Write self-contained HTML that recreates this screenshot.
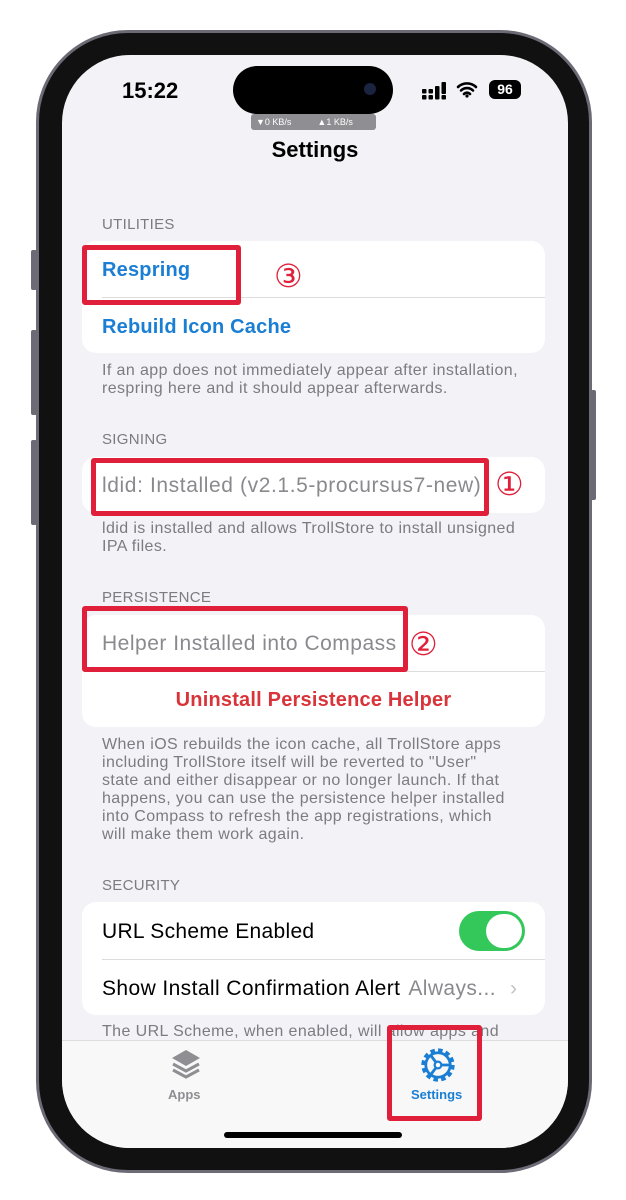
<!DOCTYPE html>
<html><head><meta charset="utf-8"><style>
*{margin:0;padding:0;box-sizing:border-box}
body{width:626px;height:1200px;background:#fff;position:relative;overflow:hidden;font-family:"Liberation Sans","Noto Sans CJK JP",sans-serif}
.a{position:absolute;white-space:nowrap}
.frame{left:36px;top:30px;width:556px;height:1143px;border-radius:92px;background:#111;border:3px solid #6c6a75}
.screen{left:62px;top:55px;width:506px;height:1093px;border-radius:68px;background:#f2f2f7;overflow:hidden}
.card{position:absolute;left:20px;width:463px;background:#fff;border-radius:14px}
.hd{color:#7b7b80;font-size:15px;letter-spacing:0.3px}
.ft{color:#7b7b80;font-size:16px;line-height:18px;letter-spacing:0.4px}
.row{font-size:20px;letter-spacing:0.5px}
.div{position:absolute;left:20px;right:0;height:1px;background:#ddd}
.red{position:absolute;border:5px solid #e0203a;border-radius:3px}
.num{position:absolute;color:#e0203a;font-size:32px;font-family:"DejaVu Sans",sans-serif}
</style></head><body>
<div class="a" style="left:31px;top:250px;width:6px;height:40px;background:#6c6a75;border-radius:2px"></div>
<div class="a" style="left:31px;top:330px;width:6px;height:85px;background:#6c6a75;border-radius:2px"></div>
<div class="a" style="left:31px;top:440px;width:6px;height:85px;background:#6c6a75;border-radius:2px"></div>
<div class="a" style="left:590px;top:390px;width:6px;height:110px;background:#6c6a75;border-radius:2px"></div>
<div class="a frame"></div>
<div class="a screen">
 <div class="a" style="left:60px;top:23px;font-size:22px;font-weight:bold">15:22</div>
 <div class="a" style="left:171px;top:11px;width:160px;height:48px;border-radius:24px;background:#000"></div>
 <div class="a" style="left:302px;top:28px;width:12px;height:12px;border-radius:6px;background:#1a2340"></div>
 <svg class="a" style="left:360px;top:27px" width="27" height="18" viewBox="0 0 27 18"><g fill="#000"><rect x="0" y="7" width="4.5" height="4.5" rx="1"/><rect x="0" y="13" width="4.5" height="4.5" rx="1"/><rect x="6.5" y="7" width="4.5" height="4.5" rx="1"/><rect x="6.5" y="13" width="4.5" height="4.5" rx="1"/><rect x="13" y="4" width="4.5" height="13.5" rx="1"/><rect x="19.5" y="0" width="4.5" height="12" rx="1"/><rect x="19.5" y="13" width="4.5" height="4.5" rx="1"/></g></svg>
 <svg class="a" style="left:394px;top:25px" width="22" height="18" viewBox="0 0 22 18"><path d="M2 7a13 13 0 0 1 18 0M5 10.5a8.5 8.5 0 0 1 12 0M8 14a4 4 0 0 1 6 0" stroke="#000" stroke-width="2.6" fill="none" stroke-linecap="round"/><circle cx="11" cy="16" r="1.6"/></svg>
 <div class="a" style="left:427px;top:25px;width:32px;height:19px;border-radius:6px;background:#000;color:#fff;font-size:14px;font-weight:bold;text-align:center;line-height:19px">96</div>
 <div class="a" style="left:189px;top:59px;width:125px;height:16px;background:#8e8e93;border-radius:3px;color:#fff;font-size:9px;line-height:16px"><span style="margin-left:5px">▼0 KB/s</span><span style="margin-left:26px">▲1 KB/s</span></div>
 <div class="a" style="left:0;width:506px;top:82px;text-align:center;font-size:22px;font-weight:bold">Settings</div>

 <div class="a hd" style="left:40px;top:161px">UTILITIES</div>
 <div class="card" style="top:186px;height:112px">
  <div class="a row" style="left:20px;top:18px;color:#1a7fd4;font-weight:bold;letter-spacing:0.2px">Respring</div>
  <div class="div" style="top:56px"></div>
  <div class="a row" style="left:20px;top:75px;color:#1a7fd4;font-weight:bold;letter-spacing:0.2px">Rebuild Icon Cache</div>
 </div>
 <div class="a ft" style="left:40px;top:307px">If an app does not immediately appear after installation,<br>respring here and it should appear afterwards.</div>

 <div class="a hd" style="left:40px;top:376px">SIGNING</div>
 <div class="card" style="top:402px;height:56px">
  <div class="a row" style="left:20px;top:17px;color:#8a8a8e;font-size:21px;letter-spacing:0.6px">ldid: Installed (v2.1.5-procursus7-new)</div>
 </div>
 <div class="a ft" style="left:40px;top:465px">ldid is installed and allows TrollStore to install unsigned<br>IPA files.</div>

 <div class="a hd" style="left:40px;top:534px">PERSISTENCE</div>
 <div class="card" style="top:560px;height:112px">
  <div class="a row" style="left:20px;top:17px;color:#8a8a8e;font-size:21px;letter-spacing:0.5px">Helper Installed into Compass</div>
  <div class="div" style="top:56px"></div>
  <div class="a row" style="left:0;width:463px;text-align:center;top:74px;color:#d9343a;font-weight:bold;letter-spacing:0.2px">Uninstall Persistence Helper</div>
 </div>
 <div class="a ft" style="left:40px;top:681px">When iOS rebuilds the icon cache, all TrollStore apps<br>including TrollStore itself will be reverted to "User"<br>state and either disappear or no longer launch. If that<br>happens, you can use the persistence helper installed<br>into Compass to refresh the app registrations, which<br>will make them work again.</div>

 <div class="a hd" style="left:40px;top:822px">SECURITY</div>
 <div class="card" style="top:847px;height:113px">
  <div class="a row" style="left:20px;top:18px;font-size:21px;letter-spacing:0.3px">URL Scheme Enabled</div>
  <div class="a" style="left:377px;top:9px;width:66px;height:40px;border-radius:20px;background:#34c759"></div>
  <div class="a" style="left:404px;top:12px;width:36px;height:34px;border-radius:18px;background:#fff"></div>
  <div class="div" style="top:57px"></div>
  <div class="a row" style="left:20px;top:75px;font-size:21px;letter-spacing:0.4px">Show Install Confirmation Alert<span style="color:#8a8a8e;margin-left:8px">Always...</span><span style="color:#c4c4c7;margin-left:14px">›</span></div>
 </div>
 <div class="a ft" style="left:40px;top:968px">The URL Scheme, when enabled, will allow apps and</div>

 <div class="a" style="left:0;top:985px;width:506px;height:110px;background:#f8f8f8;border-top:1px solid #ddd"></div>
 <svg class="a" style="left:108px;top:993px" width="32" height="36" viewBox="0 0 32 36"><path d="M16 2L30 10 16 18 2 10z" fill="#8e8e93"/><path d="M3 16l13 7 13-7M3 22l13 7 13-7" stroke="#8e8e93" stroke-width="3" fill="none"/></svg>
 <div class="a" style="left:106px;top:1032px;font-size:13px;color:#8e8e93;font-weight:bold">Apps</div>
 <svg class="a" style="left:356px;top:990px" width="40" height="40" viewBox="0 0 36 36"><circle cx="18" cy="18" r="13" stroke="#1a7fd4" stroke-width="4" fill="none" stroke-dasharray="4 2.8"/><circle cx="18" cy="18" r="11" stroke="#1a7fd4" stroke-width="2.5" fill="none"/><path d="M18 18L12 10M18 18L12 26M18 18H28" stroke="#1a7fd4" stroke-width="2.5"/><circle cx="18" cy="18" r="3" fill="#fff" stroke="#1a7fd4" stroke-width="2"/></svg>
 <div class="a" style="left:349px;top:1032px;font-size:13px;color:#1a7fd4;font-weight:bold">Settings</div>
 <div class="a" style="left:162px;top:1077px;width:178px;height:6px;border-radius:3px;background:#000"></div>
</div>

<div class="red" style="left:82px;top:245px;width:159px;height:60px"></div>
<div class="num" style="left:274px;top:257px">③</div>
<div class="red" style="left:91px;top:458px;width:398px;height:58px"></div>
<div class="num" style="left:495px;top:465px">①</div>
<div class="red" style="left:82px;top:606px;width:326px;height:66px"></div>
<div class="num" style="left:409px;top:625px">②</div>
<div class="red" style="left:387px;top:1025px;width:95px;height:96px"></div>
</body></html>
